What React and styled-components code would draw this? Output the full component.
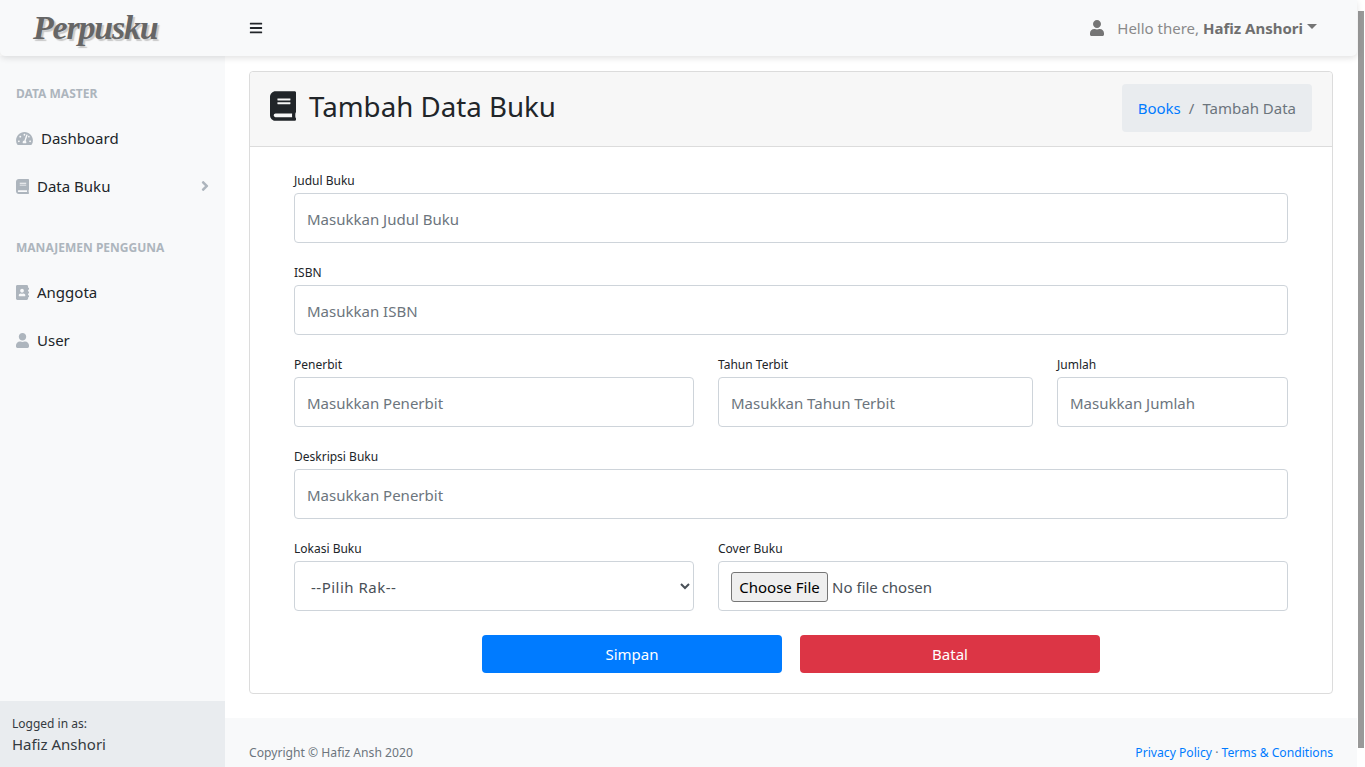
import React from "react";
import styled, { createGlobalStyle } from "styled-components";
import { FaAddressBook, FaAngleRight, FaBars, FaBook, FaTachometerAlt, FaUser } from "react-icons/fa";

const GlobalStyle = createGlobalStyle`
  html, body {
    height: 100%;
    overflow: hidden;
  }
  body {
    margin: 0;
    font-family: "Noto Sans", "Open Sans", sans-serif;
    font-size: 15px;
    color: #212529;
    background: #fff;
  }
  * {
    box-sizing: border-box;
  }
`;

const menu = [
  {
    heading: "DATA MASTER",
    items: [
      { label: "Dashboard", icon: <FaTachometerAlt />, iconWidth: 17 },
      { label: "Data Buku", icon: <FaBook />, iconWidth: 13, arrow: true },
    ],
  },
  {
    heading: "MANAJEMEN PENGGUNA",
    items: [
      { label: "Anggota", icon: <FaAddressBook />, iconWidth: 13 },
      { label: "User", icon: <FaUser />, iconWidth: 13 },
    ],
  },
];

const App = () => {
  return (
    <>
      <GlobalStyle />
      <Page>
        <Navbar>
          <Brand>Perpusku</Brand>
          <Toggle><FaBars /></Toggle>
          <Greeting>
            <UserIcon><FaUser /></UserIcon>
            Hello there,&nbsp;<strong>Hafiz Anshori</strong>
            <Caret />
          </Greeting>
        </Navbar>
        <Body>
          <Sidebar>
            <Menu>
              {menu.map((group) => (
                <div key={group.heading}>
                  <Heading>{group.heading}</Heading>
                  {group.items.map((item) => (
                    <MenuItem key={item.label}>
                      <MenuIcon $width={item.iconWidth}>{item.icon}</MenuIcon>
                      <span>{item.label}</span>
                      {item.arrow && <Arrow><FaAngleRight /></Arrow>}
                    </MenuItem>
                  ))}
                </div>
              ))}
            </Menu>
            <Logged>
              <small>Logged in as:</small>
              <div>Hafiz Anshori</div>
            </Logged>
          </Sidebar>
          <Main>
            <Content>
              <Card>
                <CardHeader>
                  <Title><FaBook />Tambah Data Buku</Title>
                  <Breadcrumb>
                    <a>Books</a>
                    <Sep>/</Sep>
                    <span>Tambah Data</span>
                  </Breadcrumb>
                </CardHeader>
                <CardBody>
                  <Row>
                    <Field>
                      <Label>Judul Buku</Label>
                      <Input placeholder="Masukkan Judul Buku" />
                    </Field>
                  </Row>
                  <Row>
                    <Field>
                      <Label>ISBN</Label>
                      <Input placeholder="Masukkan ISBN" />
                    </Field>
                  </Row>
                  <Row>
                    <Field $width={400}>
                      <Label>Penerbit</Label>
                      <Input placeholder="Masukkan Penerbit" />
                    </Field>
                    <Field $width={315}>
                      <Label>Tahun Terbit</Label>
                      <Input placeholder="Masukkan Tahun Terbit" />
                    </Field>
                    <Field $width={231}>
                      <Label>Jumlah</Label>
                      <Input placeholder="Masukkan Jumlah" />
                    </Field>
                  </Row>
                  <Row>
                    <Field>
                      <Label>Deskripsi Buku</Label>
                      <Input placeholder="Masukkan Penerbit" />
                    </Field>
                  </Row>
                  <Row>
                    <Field $width={400}>
                      <Label>Lokasi Buku</Label>
                      <Select defaultValue="">
                        <option value="">--Pilih Rak--</option>
                      </Select>
                    </Field>
                    <Field>
                      <Label>Cover Buku</Label>
                      <FileBox>
                        <FileButton type="button">Choose File</FileButton>
                        <span>No file chosen</span>
                      </FileBox>
                    </Field>
                  </Row>
                  <Actions>
                    <Button $bg="#007bff">Simpan</Button>
                    <Button $bg="#dc3545">Batal</Button>
                  </Actions>
                </CardBody>
              </Card>
            </Content>
            <Footer>
              <span>Copyright © Hafiz Ansh 2020</span>
              <FooterLinks>
                <a>Privacy Policy</a> · <a>Terms &amp; Conditions</a>
              </FooterLinks>
            </Footer>
          </Main>
        </Body>
        <ScrollThumb />
      </Page>
    </>
  );
};

const Page = styled.div`
  position: relative;
  height: 100vh;
  padding-right: 8px;
  display: flex;
  flex-direction: column;
`;

const ScrollThumb = styled.div`
  position: absolute;
  top: 11px;
  right: 1px;
  width: 6px;
  height: 737px;
  background: #999;
`;

const Navbar = styled.nav`
  position: relative;
  z-index: 2;
  flex: 0 0 56px;
  display: flex;
  align-items: center;
  background: #f8f9fa;
  border-radius: 0 0 5px 5px;
  box-shadow: 0 2px 6px rgba(0, 0, 0, 0.12);
`;

const Brand = styled.div`
  width: 249px;
  padding-left: 33px;
  font-family: "Liberation Serif", serif;
  font-style: italic;
  font-weight: 700;
  font-size: 34px;
  letter-spacing: -1.2px;
  color: #666;
  text-shadow: 2px 2px 1px #c8c8c8;
`;

const Toggle = styled.div`
  display: flex;
  font-size: 14px;
  color: #212529;
`;

const Greeting = styled.div`
  margin-left: auto;
  padding-right: 40px;
  display: flex;
  align-items: center;
  color: #8a8a8a;
  font-size: 15px;

  strong {
    color: #6f6f6f;
    font-weight: 700;
  }
`;

const UserIcon = styled.span`
  display: flex;
  margin-right: 13px;
  color: #757575;

  svg {
    width: 14px;
    height: 16px;
  }
`;

const Caret = styled.span`
  margin-left: 4px;
  margin-bottom: 3px;
  border-top: 5px solid #757575;
  border-left: 5px solid transparent;
  border-right: 5px solid transparent;
`;

const Body = styled.div`
  flex: 1;
  min-height: 0;
  display: flex;
`;

const Sidebar = styled.aside`
  flex: 0 0 225px;
  display: flex;
  flex-direction: column;
  background: #f8f9fa;
`;

const Menu = styled.div`
  flex: 1;
`;

const Heading = styled.div`
  padding: 30px 16px 12px;
  font-size: 12px;
  font-weight: 700;
  line-height: 16px;
  color: #adb5bd;
`;

const MenuItem = styled.div`
  height: 48px;
  padding: 0 16px;
  display: flex;
  align-items: center;
  gap: 8px;
  font-size: 15px;
  color: #212529;
`;

const MenuIcon = styled.span`
  display: flex;
  color: #adb5bd;

  svg {
    width: ${(p) => p.$width}px;
    height: 15px;
  }
`;

const Arrow = styled.span`
  display: flex;
  margin-left: auto;
  color: #adb5bd;

  svg {
    width: 8px;
    height: 16px;
  }
`;

const Logged = styled.div`
  height: 66px;
  padding: 14px 12px;
  background: #e9ecef;
  color: #343a40;
  font-size: 15px;
  line-height: 22px;

  small {
    display: block;
    font-size: 12px;
    line-height: 18px;
  }
`;

const Main = styled.main`
  flex: 1;
  min-width: 0;
  display: flex;
  flex-direction: column;
`;

const Content = styled.div`
  flex: 1;
  padding: 15px 24px 24px;
`;

const Card = styled.div`
  border: 1px solid #dcdcdc;
  border-radius: 4px;
`;

const CardHeader = styled.div`
  height: 75px;
  padding: 12px 20px 14px;
  display: flex;
  align-items: center;
  justify-content: space-between;
  background: #f7f7f7;
  border-bottom: 1px solid #dcdcdc;
  border-radius: 4px 4px 0 0;
`;

const Title = styled.h1`
  margin: 0;
  padding-bottom: 4px;
  display: flex;
  align-items: center;
  gap: 13px;
  font-size: 27.7px;
  font-weight: 400;
  color: #212529;

  svg {
    width: 26px;
    height: 30px;
  }
`;

const Breadcrumb = styled.div`
  height: 48px;
  padding: 0 16px;
  display: flex;
  align-items: center;
  background: #e9ecef;
  border-radius: 4px;
  font-size: 15px;
  color: #6c757d;

  a {
    color: #007bff;
  }
`;

const Sep = styled.span`
  padding: 0 8px;
`;

const CardBody = styled.div`
  padding: 24px 44px 20px;
`;

const Row = styled.div`
  display: flex;
  gap: 24px;
  margin-bottom: 20px;
`;

const Field = styled.div`
  flex: ${(p) => (p.$width ? `0 0 ${p.$width}px` : "1")};
  min-width: 0;
`;

const Label = styled.label`
  display: block;
  height: 18px;
  margin-bottom: 4px;
  font-size: 12px;
  line-height: 20px;
  color: #212529;
`;

const Input = styled.input`
  display: block;
  width: 100%;
  height: 50px;
  padding: 2px 12px 0;
  border: 1px solid #ced4da;
  border-radius: 4px;
  background: #fff;
  font-family: inherit;
  font-size: 15px;
  color: #495057;

  &::placeholder {
    color: #6c757d;
    opacity: 1;
  }
`;

const Select = styled.select`
  display: block;
  width: 100%;
  height: 50px;
  padding: 2px 12px 0;
  border: 1px solid #ced4da;
  border-radius: 4px;
  background: #fff;
  font-family: inherit;
  font-size: 15px;
  letter-spacing: 0.5px;
  color: #495057;
`;

const FileBox = styled.div`
  height: 50px;
  padding: 2px 12px 0;
  display: flex;
  align-items: center;
  gap: 4px;
  border: 1px solid #ced4da;
  border-radius: 4px;
  font-size: 15px;
  color: #495057;
`;

const FileButton = styled.button`
  width: 97px;
  height: 30px;
  padding: 0;
  border: 1px solid #767676;
  border-radius: 3px;
  background: #efefef;
  font-family: inherit;
  font-size: 15px;
  color: #000;
`;

const Actions = styled.div`
  margin-top: 24px;
  display: flex;
  justify-content: center;
  gap: 18px;
`;

const Button = styled.button`
  width: 300px;
  height: 38px;
  border: none;
  border-radius: 4px;
  background: ${(p) => p.$bg};
  font-family: inherit;
  font-size: 15px;
  color: #fff;
`;

const Footer = styled.footer`
  flex: 0 0 49px;
  padding: 26px 24px 0;
  display: flex;
  justify-content: space-between;
  align-items: flex-start;
  background: #f8f9fa;
  font-size: 12.15px;
  line-height: 18px;
  color: #6c757d;
`;

const FooterLinks = styled.div`
  a {
    color: #007bff;
  }
`;

export default App;
